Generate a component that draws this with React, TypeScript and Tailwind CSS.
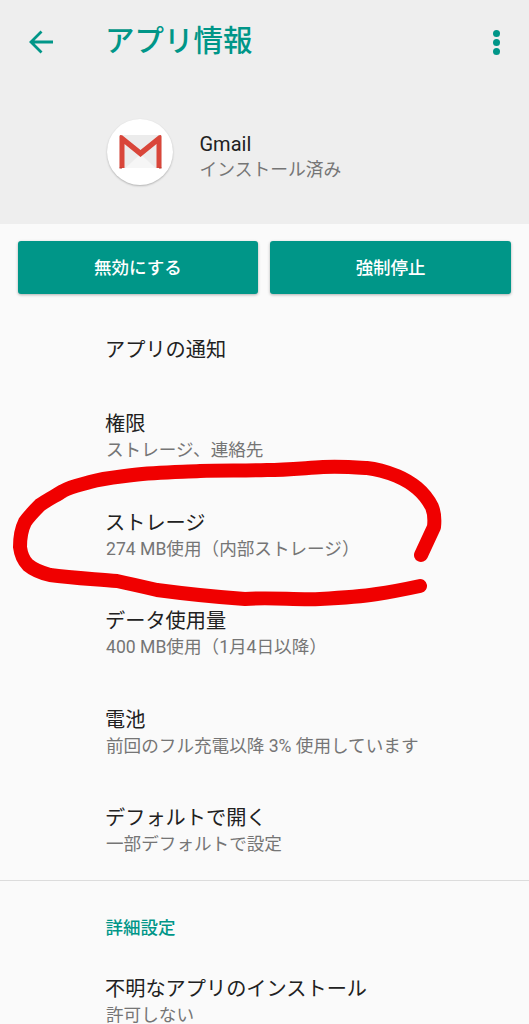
const font = "font-['Roboto','Noto_Sans_CJK_JP',sans-serif]";

function Row({ title, sub, h = "h-[98.5px]" }: { title: string; sub?: string; h?: string }) {
  return (
    <div className={`${h} flex flex-col justify-center pl-[105px]`}>
      <div className="text-[20.2px] leading-[26px] text-[#212121]">{title}</div>
      {sub && <div className="pl-[1px] text-[17.6px] leading-[26px] text-[#757575] whitespace-nowrap">{sub}</div>}
    </div>
  );
}

export default function App() {
  return (
    <div className={`relative w-[529px] h-[1024px] overflow-hidden bg-[#fafafa] ${font}`}>
      <div className="h-[224px] bg-[#eeeeee] flex flex-col">
        <div className="h-[84px] flex items-center">
          <div className="w-[105px] pl-[28px] flex">
            <svg width="26" height="26" viewBox="0 0 26 26" fill="none" stroke="#009688" strokeWidth="2.8">
              <path d="M25 13H3M13.5 2.5L3 13l10.500 10.500" />
            </svg>
          </div>
          <div className="flex-1 text-[29.5px] font-medium text-[#009688] leading-none">アプリ情報</div>
          <div className="pr-[29px] flex flex-col gap-[2px]">
            <span className="w-[7px] h-[7px] rounded-full bg-[#009688]" />
            <span className="w-[7px] h-[7px] rounded-full bg-[#009688]" />
            <span className="w-[7px] h-[7px] rounded-full bg-[#009688]" />
          </div>
        </div>
        <div className="flex items-center pl-[107px] mt-[35px]">
          <div className="w-[66px] h-[66px] rounded-full bg-white shadow-[0_1px_2px_rgba(0,0,0,0.25)] flex items-center justify-center">
            <svg width="47" height="36" viewBox="0 0 46 36">
              <path d="M2 1h42v33H2z" fill="#ececec" />
              <path d="M8 34L23 20l15 14z" fill="#f6f6f6" />
              <path d="M2 34V2.500C2 1 3.500 .5 5 1.500L23 16 41 1.500C42.500 .5 44 1 44 2.500V34h-5V10L23 23 7 10v24z" fill="#d9463a" />
              <path d="M2 34h2.500M41.500 34H44" stroke="#b5352b" strokeWidth="1" />
            </svg>
          </div>
          <div className="ml-[26.5px] flex flex-col pt-[9px]">
            <div className="text-[20px] leading-[26px] text-[#212121]">Gmail</div>
            <div className="text-[17.8px] leading-[26px] text-[#757575]">インストール済み</div>
          </div>
        </div>
      </div>

      <div className="flex gap-[12px] pl-[17.5px] pr-[18px] mt-[17px]">
        <button className="flex-1 h-[53px] pt-[2px] rounded-[3px] bg-[#009688] text-white text-[17.5px] font-medium shadow-[0_1px_3px_rgba(0,0,0,0.3)]">無効にする</button>
        <button className="flex-1 h-[53px] pt-[2px] rounded-[3px] bg-[#009688] text-white text-[17.5px] font-medium shadow-[0_1px_3px_rgba(0,0,0,0.3)]">強制停止</button>
      </div>

      <div className="mt-[18px]">
        <Row title="アプリの通知" h="h-[76px]" />
        <Row title="権限" sub="ストレージ、連絡先" />
        <Row title="ストレージ" sub="274 MB使用（内部ストレージ）" />
        <Row title="データ使用量" sub="400 MB使用（1月4日以降）" />
        <Row title="電池" sub="前回のフル充電以降 3% 使用しています" />
        <Row title="デフォルトで開く" sub="一部デフォルトで設定" h="h-[97.5px]" />
      </div>

      <div className="h-px bg-[#dcdcdc]" />
      <div className="pl-[105.5px] mt-[35px] text-[17.5px] leading-[24px] font-medium text-[#009688]">詳細設定</div>
      <div className="pl-[105px] mt-[36px]">
        <div className="text-[20.2px] leading-[26px] text-[#212121]">不明なアプリのインストール</div>
        <div className="pl-[1px] text-[17.6px] leading-[26px] text-[#757575]">許可しない</div>
      </div>

      <svg className="absolute left-0 top-0 pointer-events-none" width="529" height="1024" viewBox="0 0 529 1024" fill="none">
        <path
          d="M421 555L434 527C435 518 434 512 432 507C428 499 423 493 417 488C411 483 404 479 397 476C387 472 378 469 367 468C352 467 338 466 323 467C305 468 286 470 267 470C245 471 222 470 200 471C178 472 155 472 133 475C118 477 104 478 90 482C80 485 72 486 63 491C55 496 47 500 40 505C34 511 29 516 25 522C21 530 20 538 20 547C21 555 23 560 28 565C34 570 42 573 50 575C72 578 95 579 117 581C131 584 144 587 157 590C187 594 216 597 245 599C270 597 295 600 320 599C339 598 358 597 377 594C391 592 406 589 420 586"
          stroke="#f00000"
          strokeWidth="14"
          strokeLinecap="round"
          strokeLinejoin="round"
        />
      </svg>
    </div>
  );
}
